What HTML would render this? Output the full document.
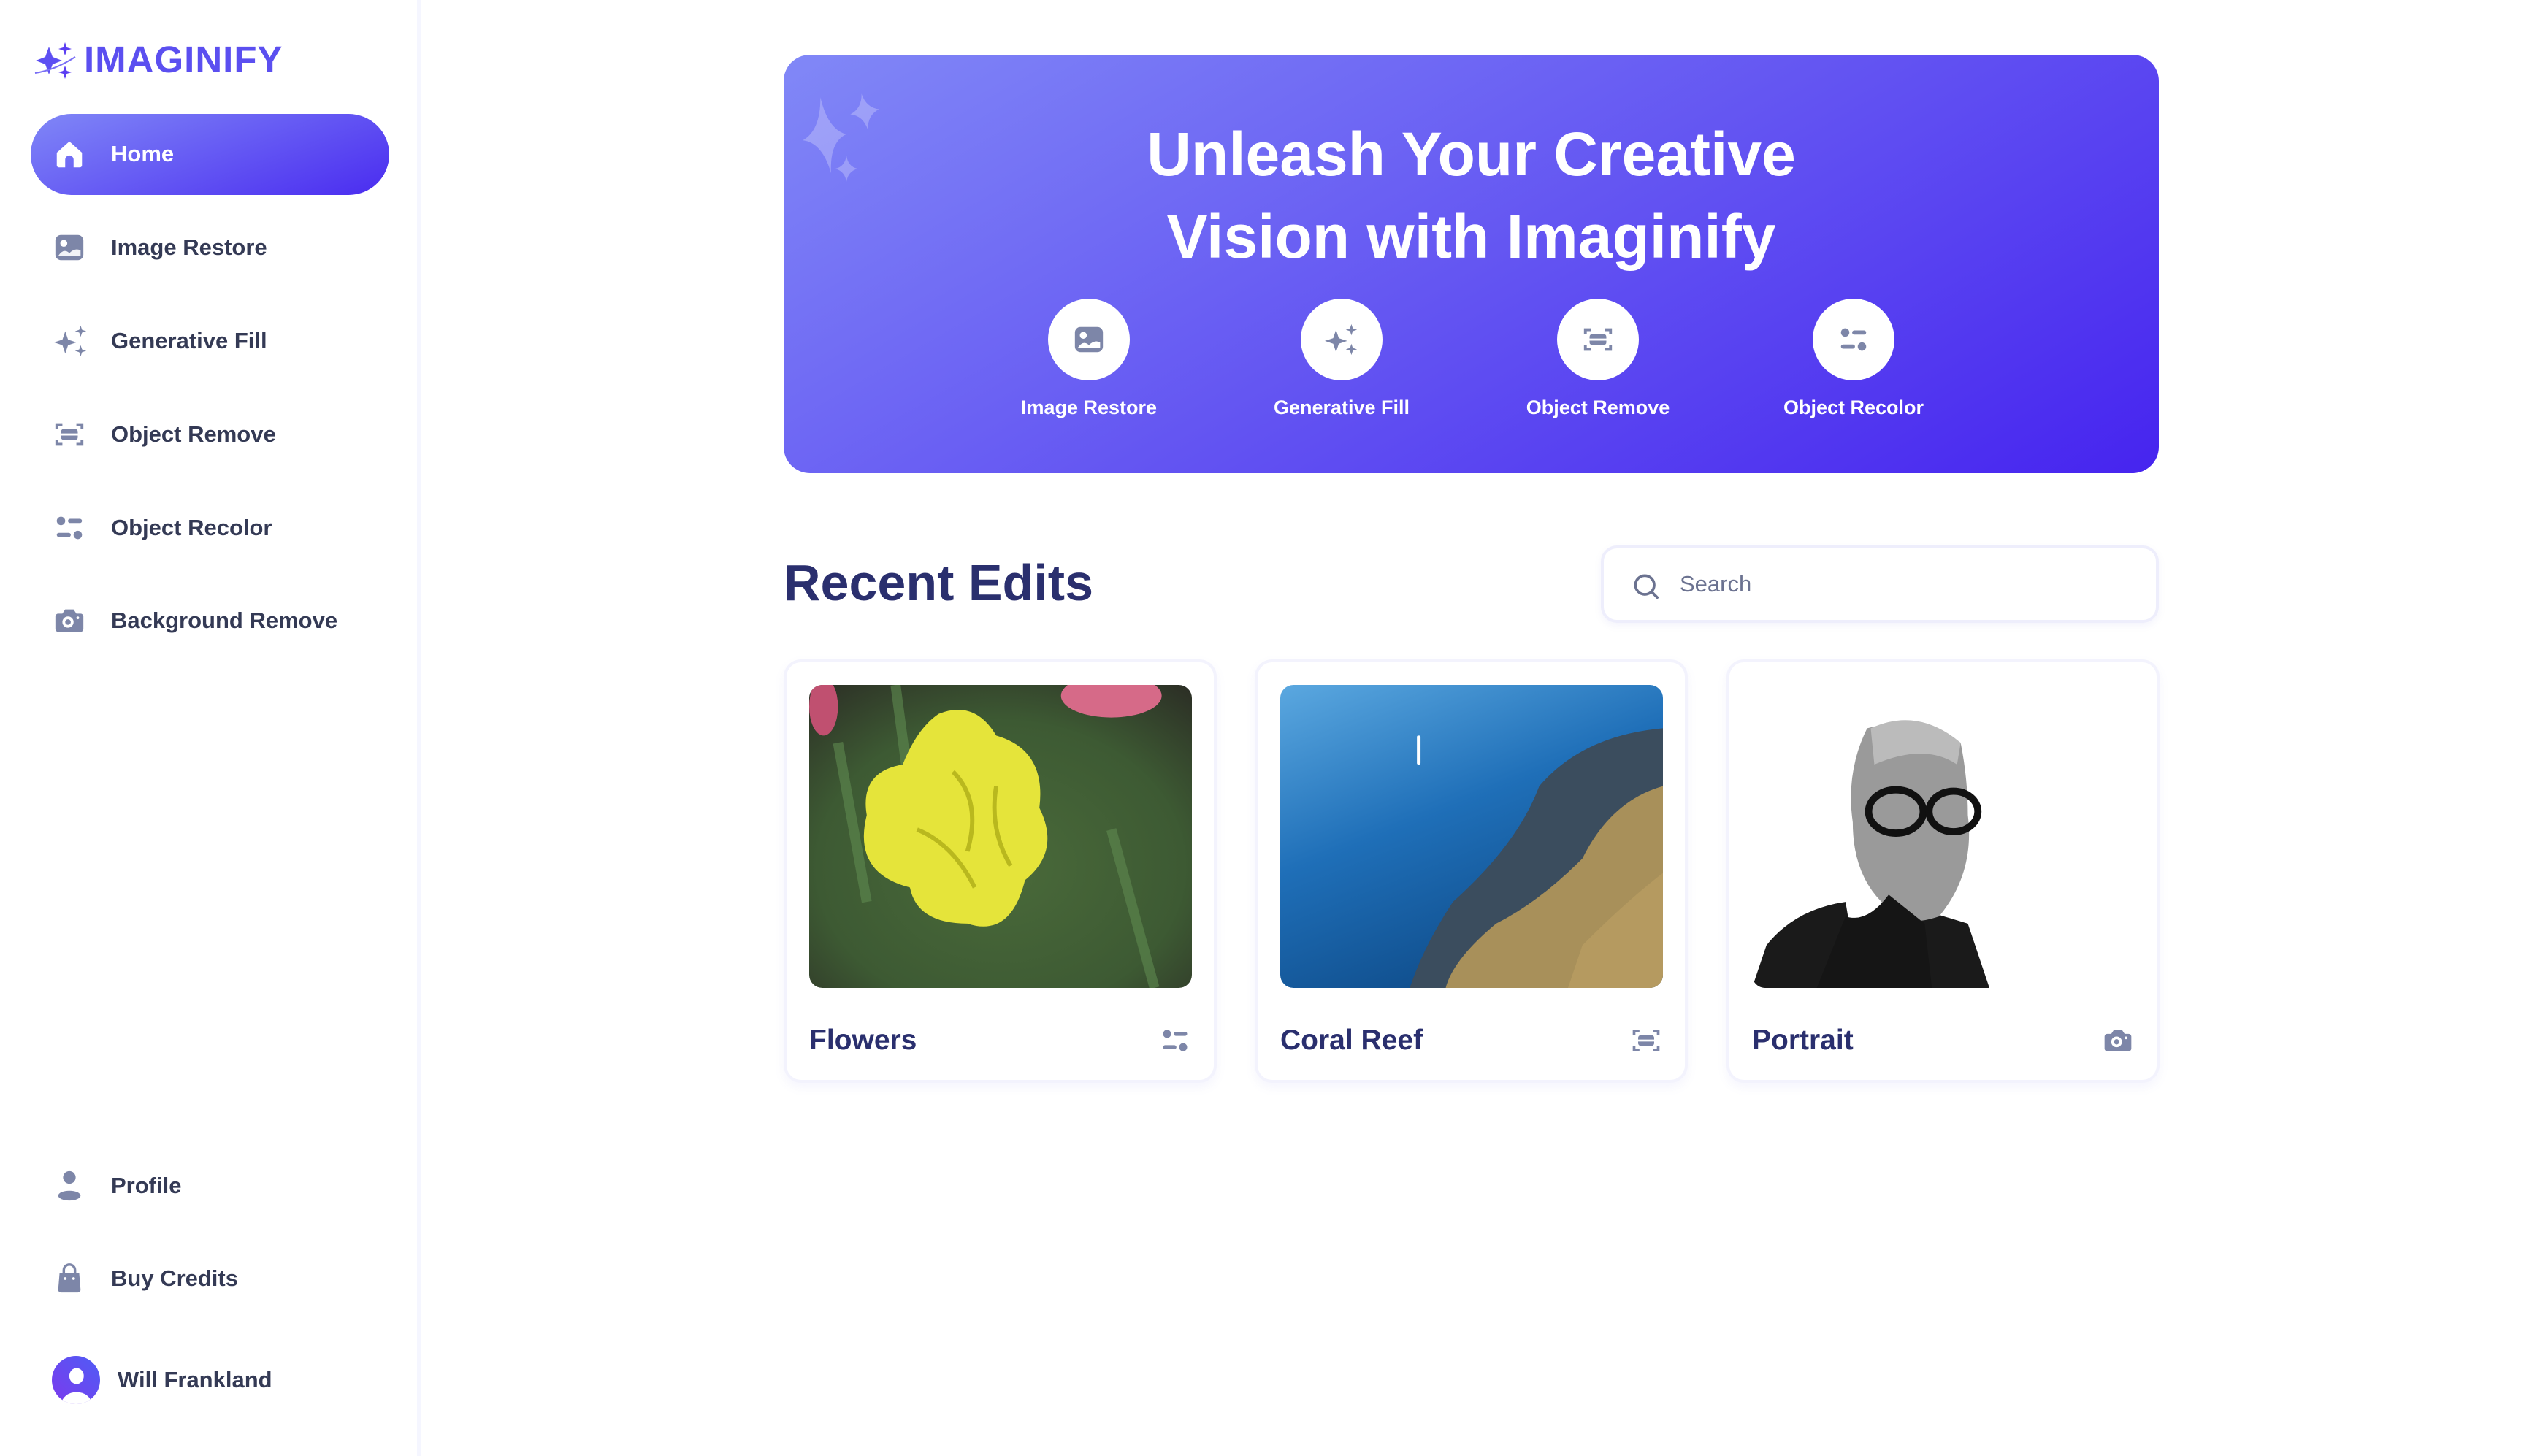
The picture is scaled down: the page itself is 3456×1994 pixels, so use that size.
<!DOCTYPE html>
<html><head><meta charset="utf-8"><style>
*{margin:0;padding:0;box-sizing:border-box}
body{width:3456px;height:1994px;background:#fff;font-family:"Liberation Sans",sans-serif;position:relative;overflow:hidden;color:#2b3253}
.sb{position:absolute;left:0;top:0;width:577px;height:1994px;background:#fff;border-right:6px solid #f5f6ff}
.logo{position:absolute;left:45px;top:52px;display:flex;align-items:center}
.logo span{font-size:51px;font-weight:bold;color:#5b4ff0;margin-left:10px;letter-spacing:1px}
.home{position:absolute;left:42px;top:156px;width:491px;height:111px;border-radius:56px;background:linear-gradient(160deg,#8087f7,#4a2cf0)}
.nav{position:absolute;left:0;height:60px;display:flex;align-items:center;font-size:31px;font-weight:bold;color:#343a55}
.nav svg{position:absolute;left:72px;top:7px}
.nav b{position:absolute;left:152px;white-space:nowrap}
.banner{position:absolute;left:1073px;top:75px;width:1883px;height:573px;border-radius:36px;background:linear-gradient(150deg,#8188f7 0%,#6a60f3 40%,#4624ef 100%)}
.title{position:absolute;left:0;right:0;top:80px;text-align:center;color:#fff;font-size:84px;font-weight:bold;line-height:113px}
.tool{position:absolute;top:334px;width:300px;text-align:center;color:#fff;font-size:27px;font-weight:bold}
.tool .c{width:112px;height:112px;border-radius:50%;background:#fff;margin:0 auto 22px;display:flex;align-items:center;justify-content:center}
.h2{position:absolute;left:1073px;top:758px;font-size:70px;font-weight:bold;color:#2a2f6e}
.search{position:absolute;left:2192px;top:747px;width:764px;height:106px;border:4px solid #eeeefc;border-radius:22px;box-shadow:0 4px 10px rgba(120,120,220,.08)}
.search span{position:absolute;left:104px;top:31px;font-size:31px;color:#6b7290}
.card{position:absolute;top:903px;width:593px;height:580px;border:4px solid #f3f3fd;border-radius:24px;box-shadow:0 6px 14px rgba(120,120,220,.07)}
.card .img{position:absolute;left:31px;top:31px;width:524px;height:415px;border-radius:18px;overflow:hidden}
.card .t{position:absolute;left:31px;top:496px;font-size:39px;font-weight:bold;color:#2a2f6e}
.card svg.i{position:absolute;right:31px;top:496px}
</style></head><body>
<div class="sb">
 <div class="logo">
  <svg width="60" height="52" viewBox="0 0 60 52"><path d="M22 8 L27 22 L40 27 L27 32 L22 46 L17 32 L4 27 L17 22Z" fill="#5d4ff2"/><path d="M44 2 L46.5 9 L53 11 L46.5 13 L44 20 L41.5 13 L35 11 L41.5 9Z" fill="#5b3ef2"/><path d="M44 34 L46.5 41 L53 43 L46.5 45 L44 52 L41.5 45 L35 43 L41.5 41Z" fill="#5b3ef2"/><path d="M3 44 Q30 40 58 22" stroke="#7a6ff5" stroke-width="2" fill="none"/></svg>
  <span>IMAGINIFY</span>
 </div>
 <div class="home"></div>
 <div class="nav" style="top:181px;color:#fff"><svg width="46" height="46" viewBox="0 0 24 24"><path d="M3 11 L12 3 L21 11 V20 a1.5 1.5 0 0 1-1.5 1.5 H15 V16 a3 3 0 0 0-6 0 V21.5 H4.5 A1.5 1.5 0 0 1 3 20Z" fill="#fff"/></svg><b>Home</b></div>
 <div class="nav" style="top:309px"><svg width="46" height="46" viewBox="0 0 24 24"><rect x="2" y="3" width="20" height="18" rx="4" fill="#7d86a8"/><circle cx="8" cy="9" r="2.5" fill="#fff"/><path d="M4 18 Q8 12 12 16 Q16 12 20 14 V18Z" fill="#fff" opacity=".9"/></svg><b>Image Restore</b></div>
 <div class="nav" style="top:437px"><svg width="50" height="46" viewBox="0 0 26 24"><path d="M9 5 L11 11 L17 13 L11 15 L9 21 L7 15 L1 13 L7 11Z" fill="#7d86a8"/><path d="M20 1 L21 4 L24 5 L21 6 L20 9 L19 6 L16 5 L19 4Z" fill="#7d86a8"/><path d="M20 15 L21 18 L24 19 L21 20 L20 23 L19 20 L16 19 L19 18Z" fill="#7d86a8"/></svg><b>Generative Fill</b></div>
 <div class="nav" style="top:565px"><svg width="46" height="46" viewBox="0 0 24 24" fill="none" stroke="#7d86a8" stroke-width="2"><path d="M3 8 V5 h4 M17 5 h4 v3 M3 16 v3 h4 M17 19 h4 v-3"/><rect x="6" y="8" width="12" height="8" rx="2" fill="#7d86a8" stroke="none"/><path d="M2 12 H22" stroke="#fff" stroke-width="1.5"/></svg><b>Object Remove</b></div>
 <div class="nav" style="top:693px"><svg width="46" height="46" viewBox="0 0 24 24" fill="#7d86a8"><circle cx="6" cy="7" r="3"/><rect x="11" y="5.5" width="10" height="3" rx="1.5"/><rect x="3" y="15.5" width="10" height="3" rx="1.5"/><circle cx="18" cy="17" r="3"/></svg><b>Object Recolor</b></div>
 <div class="nav" style="top:820px"><svg width="46" height="46" viewBox="0 0 24 24"><path d="M4 7 h3 l2-3 h6 l2 3 h3 a2 2 0 0 1 2 2 v9 a2 2 0 0 1-2 2 H4 a2 2 0 0 1-2-2 V9 a2 2 0 0 1 2-2Z" fill="#7d86a8"/><circle cx="11" cy="13" r="3" fill="none" stroke="#fff" stroke-width="2"/><circle cx="18" cy="10" r="1" fill="#fff"/></svg><b>Background Remove</b></div>
 <div class="nav" style="top:1594px"><svg width="46" height="46" viewBox="0 0 24 24" fill="#7d86a8"><circle cx="12" cy="6" r="4.5"/><ellipse cx="12" cy="19" rx="8" ry="3.5"/></svg><b>Profile</b></div>
 <div class="nav" style="top:1721px"><svg width="46" height="46" viewBox="0 0 24 24"><path d="M8 8 V6 a4 4 0 0 1 8 0 V8" fill="none" stroke="#7d86a8" stroke-width="1.8"/><path d="M5 8 h14 l1 12 a2 2 0 0 1-2 2 H6 a2 2 0 0 1-2-2Z" fill="#7d86a8"/><circle cx="9" cy="12" r="1" fill="#fff"/><circle cx="15" cy="12" r="1" fill="#fff"/></svg><b>Buy Credits</b></div>
 <div class="nav" style="top:1860px"><svg width="66" height="66" viewBox="0 0 24 24" style="left:71px;top:-3px"><defs><linearGradient id="av" x1="0" y1="1" x2="1" y2="0"><stop offset="0" stop-color="#7c3aed"/><stop offset="1" stop-color="#4f5cf5"/></linearGradient><clipPath id="cc"><circle cx="12" cy="12" r="12"/></clipPath></defs><circle cx="12" cy="12" r="12" fill="url(#av)"/><g clip-path="url(#cc)" fill="#fff"><ellipse cx="12.3" cy="10" rx="3.6" ry="4"/><ellipse cx="12.3" cy="24" rx="7.5" ry="6"/></g></svg><b style="left:161px">Will Frankland</b></div>
</div>

<div class="banner">
 <svg style="position:absolute;left:26px;top:48px" width="140" height="140" viewBox="0 0 140 140" fill="#fff" opacity=".25"><path d="M32 0 Q36 45 60 55 Q36 62 32 105 Q26 62 0 55 Q26 45 32 0Z" transform="translate(0,10) rotate(-8 30 55)"/><path d="M85 5 Q88 25 105 30 Q88 35 85 55 Q82 35 65 30 Q82 25 85 5Z" transform="rotate(-10 85 30)"/><path d="M60 90 Q62 105 75 108 Q62 112 60 126 Q58 112 45 108 Q58 105 60 90Z"/></svg>
 <div class="title">Unleash Your Creative<br>Vision with Imaginify</div>
 <div class="tool" style="left:268px"><div class="c"><svg width="46" height="46" viewBox="0 0 24 24"><rect x="2" y="3" width="20" height="18" rx="4" fill="#7d86a8"/><circle cx="8" cy="9" r="2.5" fill="#fff"/><path d="M4 18 Q8 12 12 16 Q16 12 20 14 V18Z" fill="#fff"/></svg></div>Image Restore</div>
 <div class="tool" style="left:614px"><div class="c"><svg width="50" height="46" viewBox="0 0 26 24" fill="#7d86a8"><path d="M9 5 L11 11 L17 13 L11 15 L9 21 L7 15 L1 13 L7 11Z"/><path d="M20 1 L21 4 L24 5 L21 6 L20 9 L19 6 L16 5 L19 4Z"/><path d="M20 15 L21 18 L24 19 L21 20 L20 23 L19 20 L16 19 L19 18Z"/></svg></div>Generative Fill</div>
 <div class="tool" style="left:965px"><div class="c"><svg width="46" height="46" viewBox="0 0 24 24" fill="none" stroke="#7d86a8" stroke-width="2"><path d="M3 8 V5 h4 M17 5 h4 v3 M3 16 v3 h4 M17 19 h4 v-3"/><rect x="6" y="8" width="12" height="8" rx="2" fill="#7d86a8" stroke="none"/><path d="M2 12 H22" stroke="#fff" stroke-width="1.5"/></svg></div>Object Remove</div>
 <div class="tool" style="left:1315px"><div class="c"><svg width="46" height="46" viewBox="0 0 24 24" fill="#7d86a8"><circle cx="6" cy="7" r="3"/><rect x="11" y="5.5" width="10" height="3" rx="1.5"/><rect x="3" y="15.5" width="10" height="3" rx="1.5"/><circle cx="18" cy="17" r="3"/></svg></div>Object Recolor</div>
</div>

<div class="h2">Recent Edits</div>
<div class="search"><svg style="position:absolute;left:36px;top:30px" width="44" height="44" viewBox="0 0 24 24" fill="none" stroke="#6b7290" stroke-width="2"><circle cx="11" cy="11" r="7"/><path d="M16 16 L21 21"/></svg><span>Search</span></div>

<div class="card" style="left:1073px">
 <div class="img"><svg width="524" height="415" viewBox="0 0 532 419" preserveAspectRatio="none"><defs><radialGradient id="fg" cx=".5" cy=".6" r=".8"><stop offset="0" stop-color="#4a6a3a"/><stop offset=".6" stop-color="#3d5a33"/><stop offset="1" stop-color="#2a2a24"/></radialGradient></defs><rect width="532" height="419" fill="url(#fg)"/><path d="M40 80 L80 300 M120 0 L140 150 M420 200 L480 419" stroke="#5f8a50" stroke-width="14" opacity=".6"/><ellipse cx="420" cy="15" rx="70" ry="30" fill="#d66a88"/><ellipse cx="20" cy="30" rx="20" ry="40" fill="#c05070"/><path d="M180 40 Q230 20 260 70 Q330 90 320 170 Q350 230 300 270 Q280 350 220 330 Q150 330 140 280 Q60 260 80 180 Q70 120 130 110 Q150 60 180 40Z" fill="#e5e43a"/><path d="M200 120 Q240 160 220 230 M260 140 Q250 200 280 250 M150 200 Q200 220 230 280" stroke="#b9b81e" stroke-width="6" fill="none"/></svg></div>
 <div class="t">Flowers</div>
 <svg class="i" width="44" height="44" viewBox="0 0 24 24" fill="#7d86a8"><circle cx="6" cy="7" r="3"/><rect x="11" y="5.5" width="10" height="3" rx="1.5"/><rect x="3" y="15.5" width="10" height="3" rx="1.5"/><circle cx="18" cy="17" r="3"/></svg>
</div>
<div class="card" style="left:1718px">
 <div class="img"><svg width="524" height="415" viewBox="0 0 532 419" preserveAspectRatio="none"><defs><linearGradient id="sea" x1="0" y1="0" x2=".5" y2="1"><stop offset="0" stop-color="#5ba8e0"/><stop offset=".5" stop-color="#1f6fb8"/><stop offset="1" stop-color="#0f4c8a"/></linearGradient></defs><rect width="532" height="419" fill="url(#sea)"/><path d="M532 60 Q420 70 360 140 Q330 220 240 300 Q200 360 180 419 H532Z" fill="#3b4d5e"/><path d="M532 140 Q460 160 420 240 Q360 300 300 330 Q240 380 230 419 H532Z" fill="#a8905a"/><path d="M532 260 Q480 300 420 360 L400 419 H532Z" fill="#b59a60"/><rect x="190" y="70" width="5" height="40" rx="2" fill="#fff"/></svg></div>
 <div class="t">Coral Reef</div>
 <svg class="i" width="44" height="44" viewBox="0 0 24 24" fill="none" stroke="#7d86a8" stroke-width="2"><path d="M3 8 V5 h4 M17 5 h4 v3 M3 16 v3 h4 M17 19 h4 v-3"/><rect x="6" y="8" width="12" height="8" rx="2" fill="#7d86a8" stroke="none"/><path d="M2 12 H22" stroke="#fff" stroke-width="1.5"/></svg>
</div>
<div class="card" style="left:2364px">
 <div class="img"><svg width="524" height="415" viewBox="0 0 532 419" preserveAspectRatio="none"><path d="M0 419 L20 360 Q60 310 130 300 L150 419Z M100 419 Q120 330 200 300 L300 330 L330 419Z" fill="#1a1a1a"/><path d="M160 60 Q230 40 290 80 Q300 130 300 180 Q310 260 260 320 Q200 340 180 300 Q140 260 140 190 Q130 120 160 60Z" fill="#9a9a9a"/><path d="M165 60 Q230 30 290 80 L285 110 Q240 80 170 110Z" fill="#bbb"/><ellipse cx="200" cy="175" rx="38" ry="30" fill="none" stroke="#111" stroke-width="10"/><ellipse cx="280" cy="175" rx="34" ry="28" fill="none" stroke="#111" stroke-width="10"/><path d="M130 320 Q160 330 190 290 L240 330 L250 419 H90Z" fill="#151515"/></svg></div>
 <div class="t">Portrait</div>
 <svg class="i" width="44" height="44" viewBox="0 0 24 24"><path d="M4 7 h3 l2-3 h6 l2 3 h3 a2 2 0 0 1 2 2 v9 a2 2 0 0 1-2 2 H4 a2 2 0 0 1-2-2 V9 a2 2 0 0 1 2-2Z" fill="#7d86a8"/><circle cx="11" cy="13" r="3" fill="none" stroke="#fff" stroke-width="2"/><circle cx="18" cy="10" r="1" fill="#fff"/></svg>
</div>
</body></html>
